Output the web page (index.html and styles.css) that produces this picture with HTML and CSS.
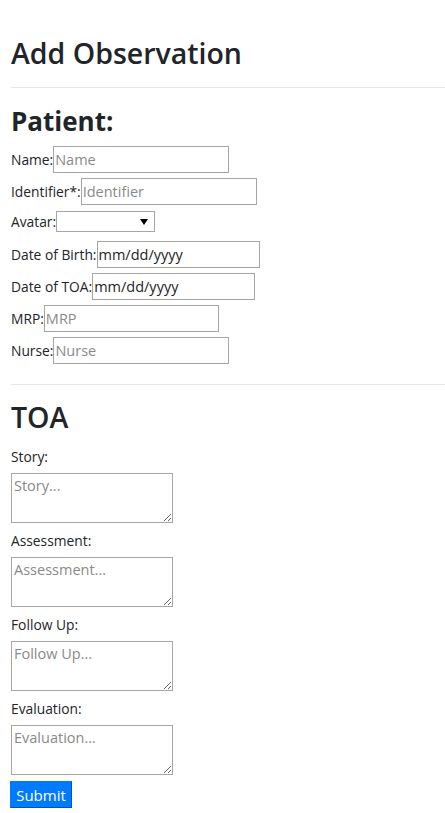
FILE: index.html
```html
<!DOCTYPE html>
<html>
<head>
<meta charset="utf-8">
<link rel="stylesheet" href="styles.css">
</head>
<body>
<div class="page">
  <h1 class="title">Add Observation</h1>
  <hr class="rule">
  <h2 class="section-bold">Patient:</h2>
  <div class="row"><label>Name:</label><input class="field w176" placeholder="Name"></div>
  <div class="row"><label>Identifier*:</label><input class="field w176" placeholder="Identifier"></div>
  <div class="row row-select"><label>Avatar:</label><span class="select-wrap"><select class="select"><option></option></select><span class="arrow"></span></span></div>
  <div class="row"><label>Date of Birth:</label><input class="field w163 dark" value="mm/dd/yyyy"></div>
  <div class="row"><label>Date of TOA:</label><input class="field w163 dark" value="mm/dd/yyyy"></div>
  <div class="row"><label>MRP:</label><input class="field w175" placeholder="MRP"></div>
  <div class="row"><label>Nurse:</label><input class="field w176" placeholder="Nurse"></div>
  <hr class="rule rule2">
  <h2 class="section">TOA</h2>
  <div class="block"><div class="blabel">Story:</div><textarea class="area" placeholder="Story..."></textarea></div>
  <div class="block"><div class="blabel">Assessment:</div><textarea class="area" placeholder="Assessment..."></textarea></div>
  <div class="block"><div class="blabel">Follow Up:</div><textarea class="area" placeholder="Follow Up..."></textarea></div>
  <div class="block"><div class="blabel">Evaluation:</div><textarea class="area" placeholder="Evaluation..."></textarea></div>
  <button class="submit">Submit</button>
</div>
</body>
</html>
```
FILE: styles.css
```css
html, body { margin: 0; padding: 0; background: #fff; }
body { font-family: "Open Sans", "Noto Sans", sans-serif; font-size: 13.8px; color: #212529; overflow: hidden; }
.page { padding-left: 11px; }
.title { margin: 0; padding-top: 33px; font-size: 28.5px; font-weight: 600; line-height: 40px; }
.rule { border: 0; border-top: 1px solid #e6e6e6; margin: 14px 0 0 0; }
.section-bold { margin: 8px 0 0 0; font-size: 26px; font-weight: 700; line-height: 50px; }
.section { margin: 11px 0 0 0; font-size: 28.5px; font-weight: 600; line-height: 43px; }
.row { display: flex; align-items: center; height: 27px; margin-bottom: 5px; }
.row label { white-space: nowrap; }
.field { box-sizing: border-box; height: 27px; border: 1px solid #a6a6a6; padding: 0 1px; font-family: inherit; font-size: 14.5px; color: #212529; margin: 0; outline: none; }
.field::placeholder { color: #8a8a8a; }
.dark { color: #212529; }
.w176 { width: 176px; }
.w175 { width: 175px; }
.w163 { width: 163px; }
.row-select { box-sizing: border-box; height: 26px; padding-bottom: 3px; }
.select-wrap { position: relative; display: inline-block; }
.select { appearance: none; -webkit-appearance: none; box-sizing: border-box; width: 99px; height: 21px; border: 1px solid #a6a6a6; background: #fff; margin: 0; display: block; }
.arrow { position: absolute; right: 7px; top: 8px; width: 0; height: 0; border-left: 4px solid transparent; border-right: 4px solid transparent; border-top: 6px solid #000; }
.rule2 { margin-top: 20px; }
.block { display: flex; flex-direction: column; align-items: flex-start; }
.blabel { line-height: 20px; margin-top: 8px; margin-bottom: 6px; }
.area { box-sizing: border-box; width: 162px; height: 50px; border: 1px solid #a6a6a6; padding: 2px; font-family: inherit; font-size: 14.5px; margin: 0; display: block; }
.area::placeholder { color: #8a8a8a; }
.submit { margin-top: 6px; margin-left: -1px; box-sizing: border-box; width: 62px; height: 27px; background: #007bff; color: #fff; border: 1px solid #007bff; border-bottom-color: #0057b5; border-right-color: #0057b5; font-family: inherit; font-size: 15px; padding: 0; }
```
